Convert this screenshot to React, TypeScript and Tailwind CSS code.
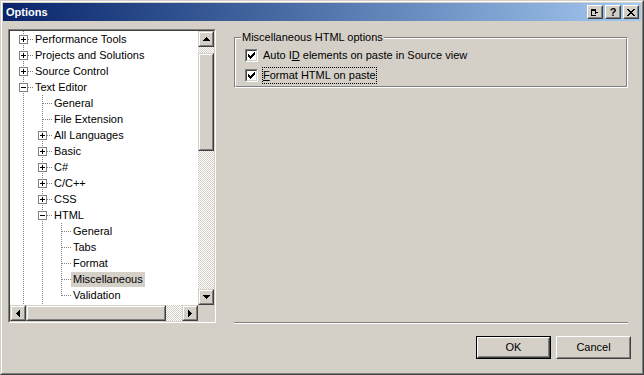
import type { ReactNode } from "react";

type Box = "plus" | "minus";

interface TreeRow {
  label: string;
  level: number;
  box?: Box;
  last?: boolean;
  selected?: boolean;
}

const rows: TreeRow[] = [
  { label: "Performance Tools", level: 0, box: "plus" },
  { label: "Projects and Solutions", level: 0, box: "plus" },
  { label: "Source Control", level: 0, box: "plus" },
  { label: "Text Editor", level: 0, box: "minus" },
  { label: "General", level: 1 },
  { label: "File Extension", level: 1 },
  { label: "All Languages", level: 1, box: "plus" },
  { label: "Basic", level: 1, box: "plus" },
  { label: "C#", level: 1, box: "plus" },
  { label: "C/C++", level: 1, box: "plus" },
  { label: "CSS", level: 1, box: "plus" },
  { label: "HTML", level: 1, box: "minus" },
  { label: "General", level: 2 },
  { label: "Tabs", level: 2 },
  { label: "Format", level: 2 },
  { label: "Miscellaneous", level: 2, selected: true },
  { label: "Validation", level: 2, last: true },
  // next sibling is scrolled out of view, only its lines peek in
  { label: "", level: 1, box: "plus" },
];

// ancestor columns that still have siblings below
const pipesFor = (level: number) => Array.from({ length: level }, () => true);

function Cell({ kind, box }: { kind: "pipe" | "tee" | "elbow"; box?: Box }) {
  return (
    <svg width="19" height="16" className="shrink-0" shapeRendering="crispEdges">
      <line
        x1="9.5"
        y1="0"
        x2="9.5"
        y2={kind === "elbow" ? 9 : 16}
        stroke="#808080"
        strokeDasharray="1 1"
      />
      {kind !== "pipe" && (
        <line
          x1={box ? 14 : 10}
          y1="8.5"
          x2="19"
          y2="8.5"
          stroke="#808080"
          strokeDasharray="1 1"
        />
      )}
      {box && (
        <>
          <rect x="5.5" y="4.5" width="8" height="8" fill="#fff" stroke="#808080" />
          <line x1="7" y1="8.5" x2="12" y2="8.5" stroke="#000" />
          {box === "plus" && <line x1="9.5" y1="6" x2="9.5" y2="11" stroke="#000" />}
        </>
      )}
    </svg>
  );
}

function Raised({ className, children }: { className?: string; children?: ReactNode }) {
  return (
    <div
      className={`border border-t-[#d4d0c8] border-l-[#d4d0c8] border-r-[#404040] border-b-[#404040] bg-[#d4d0c8] ${className ?? ""}`}
    >
      <div className="w-full h-full border border-t-white border-l-white border-r-[#808080] border-b-[#808080] flex items-center justify-center">
        {children}
      </div>
    </div>
  );
}

const checker =
  "bg-[image:repeating-conic-gradient(#d4d0c8_0%_25%,#ffffff_0%_50%)] bg-[length:2px_2px]";

function Arrow({ dir }: { dir: "up" | "down" | "left" | "right" }) {
  if (dir === "up" || dir === "down") {
    return (
      <svg width="7" height="4" shapeRendering="crispEdges">
        <path
          d={
            dir === "up"
              ? "M3 0h1v1h1v1h1v1h1v1H0V3h1V2h1V1h1z"
              : "M0 0h7v1H6v1H5v1H4v1H3V3H2V2H1V1H0z"
          }
          fill="#000"
        />
      </svg>
    );
  }
  return (
    <svg width="4" height="7" shapeRendering="crispEdges">
      <path
        d={
          dir === "left"
            ? "M3 0h1v7H3V6H2V5H1V4H0V3h1V2h1V1h1z"
            : "M0 0h1v1h1v1h1v1h1v1H3v1H2v1H1v1H0z"
        }
        fill="#000"
      />
    </svg>
  );
}

function Tree() {
  return (
    <div className="w-[208px] h-[294px] border border-t-[#808080] border-l-[#808080] border-r-white border-b-white">
      <div className="w-full h-full border border-t-[#404040] border-l-[#404040] border-r-[#d4d0c8] border-b-[#d4d0c8] flex flex-col">
        <div className="flex h-[274px]">
          <div className="w-[188px] h-full bg-white overflow-hidden pl-[4px]">
            {rows.map((row, i) => (
              <div key={i} className="flex h-[16px] items-center">
                {pipesFor(row.level).map((_, j) => (
                  <Cell key={j} kind="pipe" />
                ))}
                <Cell kind={row.last ? "elbow" : "tee"} box={row.box} />
                {row.label && (
                  <span
                    className={`px-[2px] leading-[15px] whitespace-nowrap text-black ${row.selected ? "bg-[#d4d0c8]" : ""}`}
                  >
                    {row.label}
                  </span>
                )}
              </div>
            ))}
          </div>
          <div className="w-[16px] h-full flex flex-col">
            <Raised className="w-[16px] h-[16px]">
              <Arrow dir="up" />
            </Raised>
            <div className={`h-[6px] ${checker}`} />
            <Raised className="w-[16px] h-[98px]" />
            <div className={`h-[138px] ${checker}`} />
            <Raised className="w-[16px] h-[16px]">
              <Arrow dir="down" />
            </Raised>
          </div>
        </div>
        <div className="flex h-[16px]">
          <Raised className="w-[16px] h-[16px]">
            <Arrow dir="left" />
          </Raised>
          <Raised className="w-[140px] h-[16px]" />
          <div className={`w-[16px] h-full ${checker}`} />
          <Raised className="w-[16px] h-[16px]">
            <Arrow dir="right" />
          </Raised>
          <div className="w-[16px] h-full bg-[#d4d0c8]" />
        </div>
      </div>
    </div>
  );
}

function CheckBox() {
  return (
    <div className="w-[13px] h-[13px] shrink-0 border border-t-[#808080] border-l-[#808080] border-r-white border-b-white">
      <div className="w-full h-full border border-t-[#404040] border-l-[#404040] border-r-[#d4d0c8] border-b-[#d4d0c8] bg-white flex items-center justify-center">
        <svg width="7" height="7" shapeRendering="crispEdges">
          <path
            d="M0 2h1v3H0z M1 3h1v3H1z M2 4h1v3H2z M3 3h1v3H3z M4 2h1v3H4z M5 1h1v3H5z M6 0h1v3H6z"
            fill="#000"
          />
        </svg>
      </div>
    </div>
  );
}

function TitleButton({ children }: { children: ReactNode }) {
  return (
    <div className="w-[16px] h-[14px] border border-t-white border-l-white border-r-[#404040] border-b-[#404040] bg-[#d4d0c8]">
      <div className="w-full h-full border border-t-[#d4d0c8] border-l-[#d4d0c8] border-r-[#808080] border-b-[#808080] flex items-center justify-center">
        {children}
      </div>
    </div>
  );
}

function PushButton({ label, isDefault }: { label: string; isDefault?: boolean }) {
  const inner = (
    <div className="w-full h-full border border-t-white border-l-white border-r-[#404040] border-b-[#404040]">
      <div className="w-full h-full border border-t-[#d4d0c8] border-l-[#d4d0c8] border-r-[#808080] border-b-[#808080] flex items-center justify-center text-black">
        {label}
      </div>
    </div>
  );
  if (isDefault) {
    return <div className="w-[75px] h-[23px] border border-black">{inner}</div>;
  }
  return <div className="w-[75px] h-[23px]">{inner}</div>;
}

export default function App() {
  return (
    <div className="w-[644px] h-[375px] bg-[#d4d0c8] border border-t-[#d4d0c8] border-l-[#d4d0c8] border-r-[#404040] border-b-[#404040] font-['Liberation_Sans',Arial,sans-serif] text-[11px] text-black select-none">
      <div className="w-full h-full border border-t-white border-l-white border-r-[#808080] border-b-[#808080] p-[1px] flex flex-col">
        <div className="h-[18px] flex items-center bg-linear-to-r from-[#0a246a] to-[#a6caf0] pl-[3px] pr-[2px]">
          <span className="text-white font-bold text-[11px]">Options</span>
          <div className="ml-auto flex gap-[2px]">
            <TitleButton>
              <svg width="8" height="7" shapeRendering="crispEdges">
                <path d="M0 0h5v1H1v5h4v1H0z M1 0h4v2H1z" fill="#000" />
                <path d="M4 2h1v1h1v1H5v1H4z M6 3h1v1H6z" fill="#000" />
              </svg>
            </TitleButton>
            <TitleButton>
              <span className="font-bold text-[11px] leading-[10px] text-black">?</span>
            </TitleButton>
            <TitleButton>
              <svg width="8" height="7" shapeRendering="crispEdges">
                <path
                  d="M0 0h2v1h1v1h2V1h1V0h2v1H7v1H6v1H5v1h1v1h1v1h1v1H6V6H5V5H3v1H2v1H0V6h1V5h1V4h1V3H2V2H1V1H0z"
                  fill="#000"
                />
              </svg>
            </TitleButton>
          </div>
        </div>

        <div className="flex pl-[5px] pt-[8px]">
          <Tree />
          <div className="ml-[18px] w-[394px] h-[295px] flex flex-col">
            <div className="mt-[8px] h-[51px] relative border border-t-[#808080] border-l-[#808080] border-r-white border-b-white">
              <span className="absolute left-[6px] top-[-7px] px-[1px] leading-[13px] bg-[#d4d0c8] whitespace-nowrap">
                Miscellaneous HTML options
              </span>
              <div className="w-full h-full border border-t-white border-l-white border-r-[#808080] border-b-[#808080] pl-[9px] pt-[10px] flex flex-col gap-[7px]">
                <div className="flex items-center h-[13px]">
                  <CheckBox />
                  <span className="ml-[4px] border border-transparent py-[1px] leading-[13px] whitespace-nowrap">
                    Auto I<span className="underline">D</span> elements on paste in Source view
                  </span>
                </div>
                <div className="flex items-center h-[13px]">
                  <CheckBox />
                  <span className="ml-[4px] border border-dotted border-black py-[1px] leading-[13px] whitespace-nowrap">
                    <span className="underline">F</span>ormat HTML on paste
                  </span>
                </div>
              </div>
            </div>
            <div className="mt-auto h-[2px] border-t border-t-[#808080] border-b border-b-white" />
          </div>
        </div>

        <div className="mt-[12px] flex justify-end gap-[5px] pr-[10px]">
          <PushButton label="OK" isDefault />
          <PushButton label="Cancel" />
        </div>
      </div>
    </div>
  );
}
